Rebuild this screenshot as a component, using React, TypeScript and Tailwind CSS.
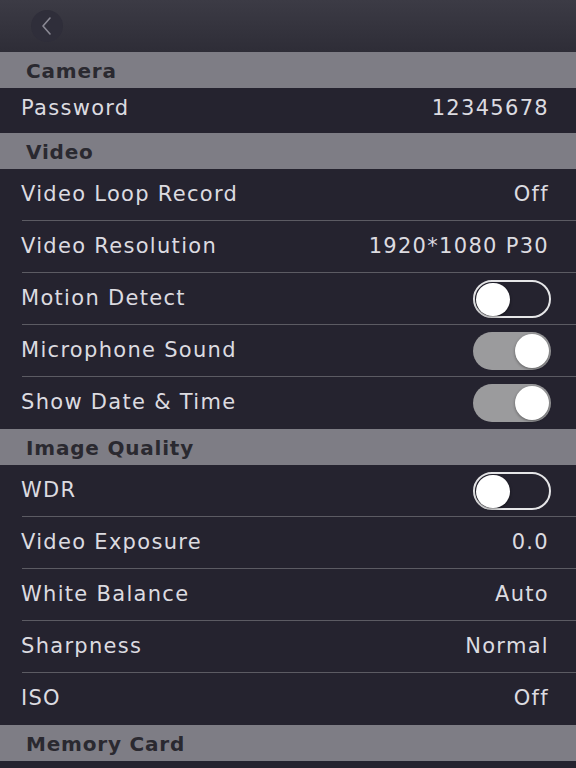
const font = { fontFamily: '"DejaVu Sans", "Liberation Sans", sans-serif' }

type Row = { label: string; value?: string; toggle?: boolean; on?: boolean; h?: string }
type Section = { title: string; rows: Row[] }

const sections: Section[] = [
    { title: 'Camera', rows: [{ label: 'Password', value: '12345678', h: 'h-[45px] pb-[3px]' }] },
    {
        title: 'Video',
        rows: [
            { label: 'Video Loop Record', value: 'Off' },
            { label: 'Video Resolution', value: '1920*1080 P30' },
            { label: 'Motion Detect', toggle: true, on: false },
            { label: 'Microphone Sound', toggle: true, on: true },
            { label: 'Show Date & Time', toggle: true, on: true },
        ],
    },
    {
        title: 'Image Quality',
        rows: [
            { label: 'WDR', toggle: true, on: false },
            { label: 'Video Exposure', value: '0.0' },
            { label: 'White Balance', value: 'Auto' },
            { label: 'Sharpness', value: 'Normal' },
            { label: 'ISO', value: 'Off' },
        ],
    },
    { title: 'Memory Card', rows: [{ label: '', h: 'h-[40px]' }] },
]

function Toggle({ on }: { on?: boolean }) {
    if (on) {
        return (
            <div className="w-[78px] h-[38px] rounded-full bg-[#9b9b9d] flex items-center justify-end pr-[2px]">
                <div className="w-[34px] h-[34px] rounded-full bg-white shadow-[0_1px_3px_rgba(0,0,0,0.4)]" />
            </div>
        )
    }
    return (
        <div className="w-[78px] h-[38px] rounded-full border-2 border-[#e6e6e8] bg-[#25232f] flex items-center pl-[1px]">
            <div className="w-[34px] h-[33px] rounded-full bg-white shadow-[0_1px_3px_rgba(0,0,0,0.5)]" />
        </div>
    )
}

export default function App() {
    return (
        <div className="w-[576px] h-[768px] overflow-hidden bg-[#25232f]" style={font}>
            {/* Top bar */}
            <div className="h-[52px] bg-gradient-to-b from-[#3c3b45] to-[#2e2d37] flex items-center pl-[31px]">
                <div className="w-[32px] h-[32px] rounded-full bg-[#2f2e3a] flex items-center justify-center">
                    <svg width="18" height="22" viewBox="0 0 18 22" fill="none">
                        <path d="M12 3 L5 11 L12 19" stroke="#8a8994" strokeWidth="1.6" strokeLinecap="round" strokeLinejoin="round" />
                    </svg>
                </div>
            </div>

            {sections.map((s) => (
                <div key={s.title}>
                    <div className="h-[36px] bg-[#7e7d85] flex items-center pl-[26px] pt-[1px] text-[20px] font-bold text-[#2a2930] tracking-[0.8px]">
                        {s.title}
                    </div>
                    {s.rows.map((r, i) => (
                        <div key={r.label + i} className={`${r.h ?? 'h-[52px]'} relative flex items-center justify-between pl-[21px] pr-[28px]`}>
                            <span className="text-[21px] text-[#dcdbe0] tracking-[1.3px]">{r.label}</span>
                            {r.toggle ? (
                                <div className="-mr-[3px]"><Toggle on={r.on} /></div>
                            ) : (
                                <span className="text-[21px] text-[#dcdbe0] tracking-[1.3px] -mr-[1px]">{r.value}</span>
                            )}
                            {i < s.rows.length - 1 && (
                                <div className="absolute left-[22px] right-0 bottom-0 h-px bg-[#5c5b63]" />
                            )}
                        </div>
                    ))}
                </div>
            ))}
        </div>
    )
}
